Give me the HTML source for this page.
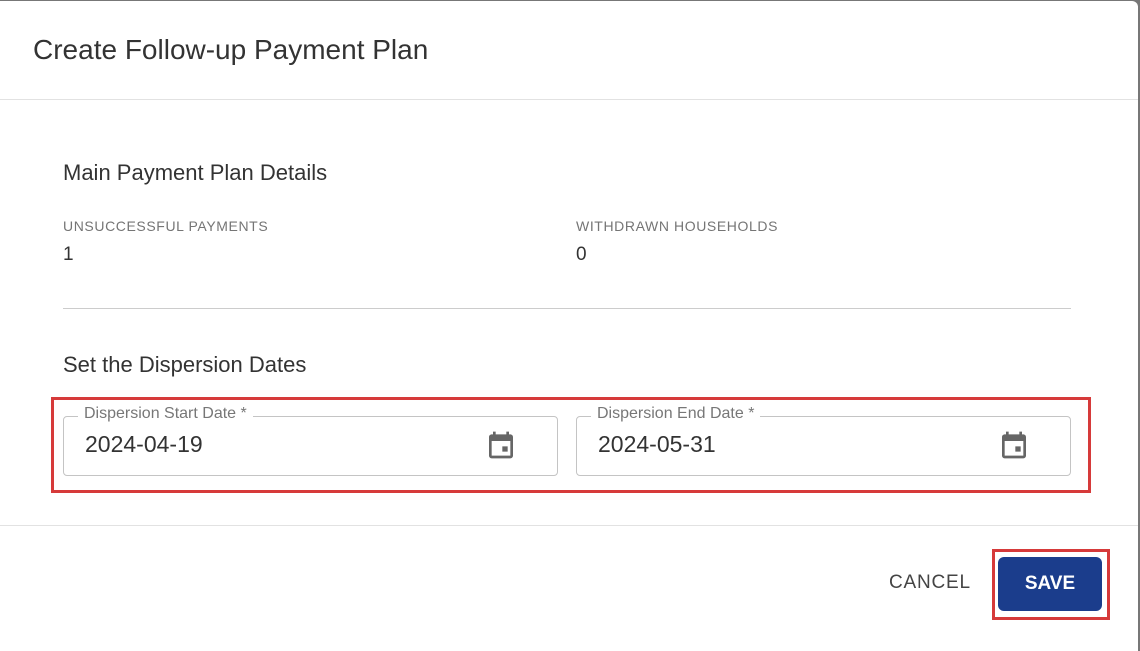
<!DOCTYPE html>
<html><head><style>
body{margin:0;width:1140px;height:640px;background:#777;font-family:"Liberation Sans",sans-serif;overflow:hidden;position:relative}
.d{position:absolute;left:0;top:1px;width:1138px;height:650px;background:#fff;border-radius:0 6px 0 0}
.t{position:absolute;left:33px;top:33px;font-size:28px;color:#333}
.hr{position:absolute;left:0;right:0;height:1px;background:#e2e2e2}
.h{position:absolute;left:63px;font-size:22px;color:#333}
.lab{position:absolute;top:217px;font-size:14px;color:#757575;letter-spacing:.6px}
.val{position:absolute;top:243px;font-size:19px;color:#333}
.f{position:absolute;top:415px;width:493px;height:58px;border:1px solid #c4c4c4;border-radius:4px}
.f span.l{position:absolute;left:14px;top:-12px;background:#fff;padding:0 6px;font-size:16px;color:#777}
.f span.v{position:absolute;left:21px;top:14px;font-size:23px;color:#333}
.f svg{position:absolute;right:40px;top:12px}
</style></head><body>
<div class="d">
<div class="t">Create Follow-up Payment Plan</div>
<div class="hr" style="top:98px"></div>
<div class="h" style="top:159px">Main Payment Plan Details</div>
<div class="lab" style="left:63px">UNSUCCESSFUL PAYMENTS</div>
<div class="lab" style="left:576px">WITHDRAWN HOUSEHOLDS</div>
<div class="val" style="left:63px">1</div>
<div class="val" style="left:576px">0</div>
<div class="hr" style="top:307px;left:63px;right:67px;background:#ccc"></div>
<div class="h" style="top:351px">Set the Dispersion Dates</div>
<div style="position:absolute;left:51px;top:396px;width:1034px;height:90px;border:3px solid #d63a3a"></div>
<div class="f" style="left:63px"><span class="l">Dispersion Start Date *</span><span class="v">2024-04-19</span>
<svg width="32" height="32" viewBox="0 0 24 24"><path fill="#666" d="M19 4h-1V2h-2v2H8V2H6v2H5c-1.1 0-2 .9-2 2v14c0 1.1.9 2 2 2h14c1.1 0 2-.9 2-2V6c0-1.1-.9-2-2-2zm0 16H5V9h14v11zm-2-7h-4v4h4v-4z"/></svg></div>
<div class="f" style="left:576px"><span class="l">Dispersion End Date *</span><span class="v">2024-05-31</span>
<svg width="32" height="32" viewBox="0 0 24 24"><path fill="#666" d="M19 4h-1V2h-2v2H8V2H6v2H5c-1.1 0-2 .9-2 2v14c0 1.1.9 2 2 2h14c1.1 0 2-.9 2-2V6c0-1.1-.9-2-2-2zm0 16H5V9h14v11zm-2-7h-4v4h4v-4z"/></svg></div>
<div class="hr" style="top:524px"></div>
<div style="position:absolute;left:889px;top:571px;font-size:19px;color:#444;letter-spacing:.8px">CANCEL</div>
<div style="position:absolute;left:992px;top:548px;width:112px;height:65px;border:3px solid #d63a3a"></div>
<div style="position:absolute;left:998px;top:556px;width:104px;height:54px;background:#1b3d8c;border-radius:6px;color:#fff;font-weight:bold;font-size:19px;text-align:center;line-height:54px">SAVE</div>
</div>
</body></html>
